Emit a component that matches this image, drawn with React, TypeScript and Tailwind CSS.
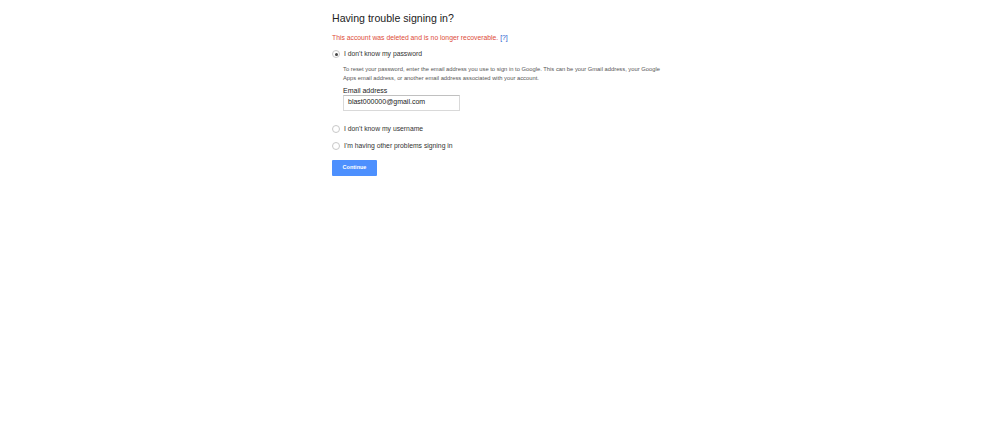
import React from "react";

function Radio({ checked }: { checked?: boolean }) {
  return (
    <span className="flex h-[8px] w-[8px] shrink-0 items-center justify-center rounded-full border border-[#c8c8c8] bg-white">
      {checked && <span className="h-[3px] w-[3px] rounded-full bg-[#444]" />}
    </span>
  );
}

export default function App() {
  return (
    <div className="min-h-[438px] w-full bg-white font-['Liberation_Sans',Arial,sans-serif] text-[#222]">
      <div className="mx-auto w-[336px] pt-[10px]">
        <h1 className="text-[10.6px] leading-[16px] font-normal text-[#222]">Having trouble signing in?</h1>
        <p className="mt-[7px] text-[6.8px] leading-[9px] text-[#dd4b39]">
          This account was deleted and is no longer recoverable.{" "}
          <a className="text-[#1155cc]">[?]</a>
        </p>
        <div className="mt-[7px] flex items-center gap-[4px] text-[6.8px] leading-[10px] text-[#333]">
          <Radio checked />
          <span>I don't know my password</span>
        </div>
        <div className="ml-[11px] mt-[6px] w-[320px]">
          <p className="text-[5.8px] leading-[9px] text-[#555]">
            To reset your password, enter the email address you use to sign in to Google. This can be your Gmail address, your Google Apps email address, or another email address associated with your account.
          </p>
          <div className="mt-[3.5px] text-[7px] leading-[8px] text-[#222]">Email address</div>
          <div className="flex h-[16px] w-[117px] items-center border border-[#d9d9d9] border-t-[#c0c0c0] px-[4px] text-[7px] text-[#222]">
            blast000000@gmail.com
          </div>
        </div>
        <div className="mt-[13px] flex items-center gap-[4px] text-[6.8px] leading-[10px] text-[#333]">
          <Radio />
          <span>I don't know my username</span>
        </div>
        <div className="mt-[7px] flex items-center gap-[4px] text-[6.8px] leading-[10px] text-[#333]">
          <Radio />
          <span>I'm having other problems signing in</span>
        </div>
        <button className="mt-[9px] flex h-[16px] w-[45px] items-center justify-center rounded-[1px] bg-[#4d90fe] text-[5.5px] font-bold text-white">
          Continue
        </button>
      </div>
    </div>
  );
}
